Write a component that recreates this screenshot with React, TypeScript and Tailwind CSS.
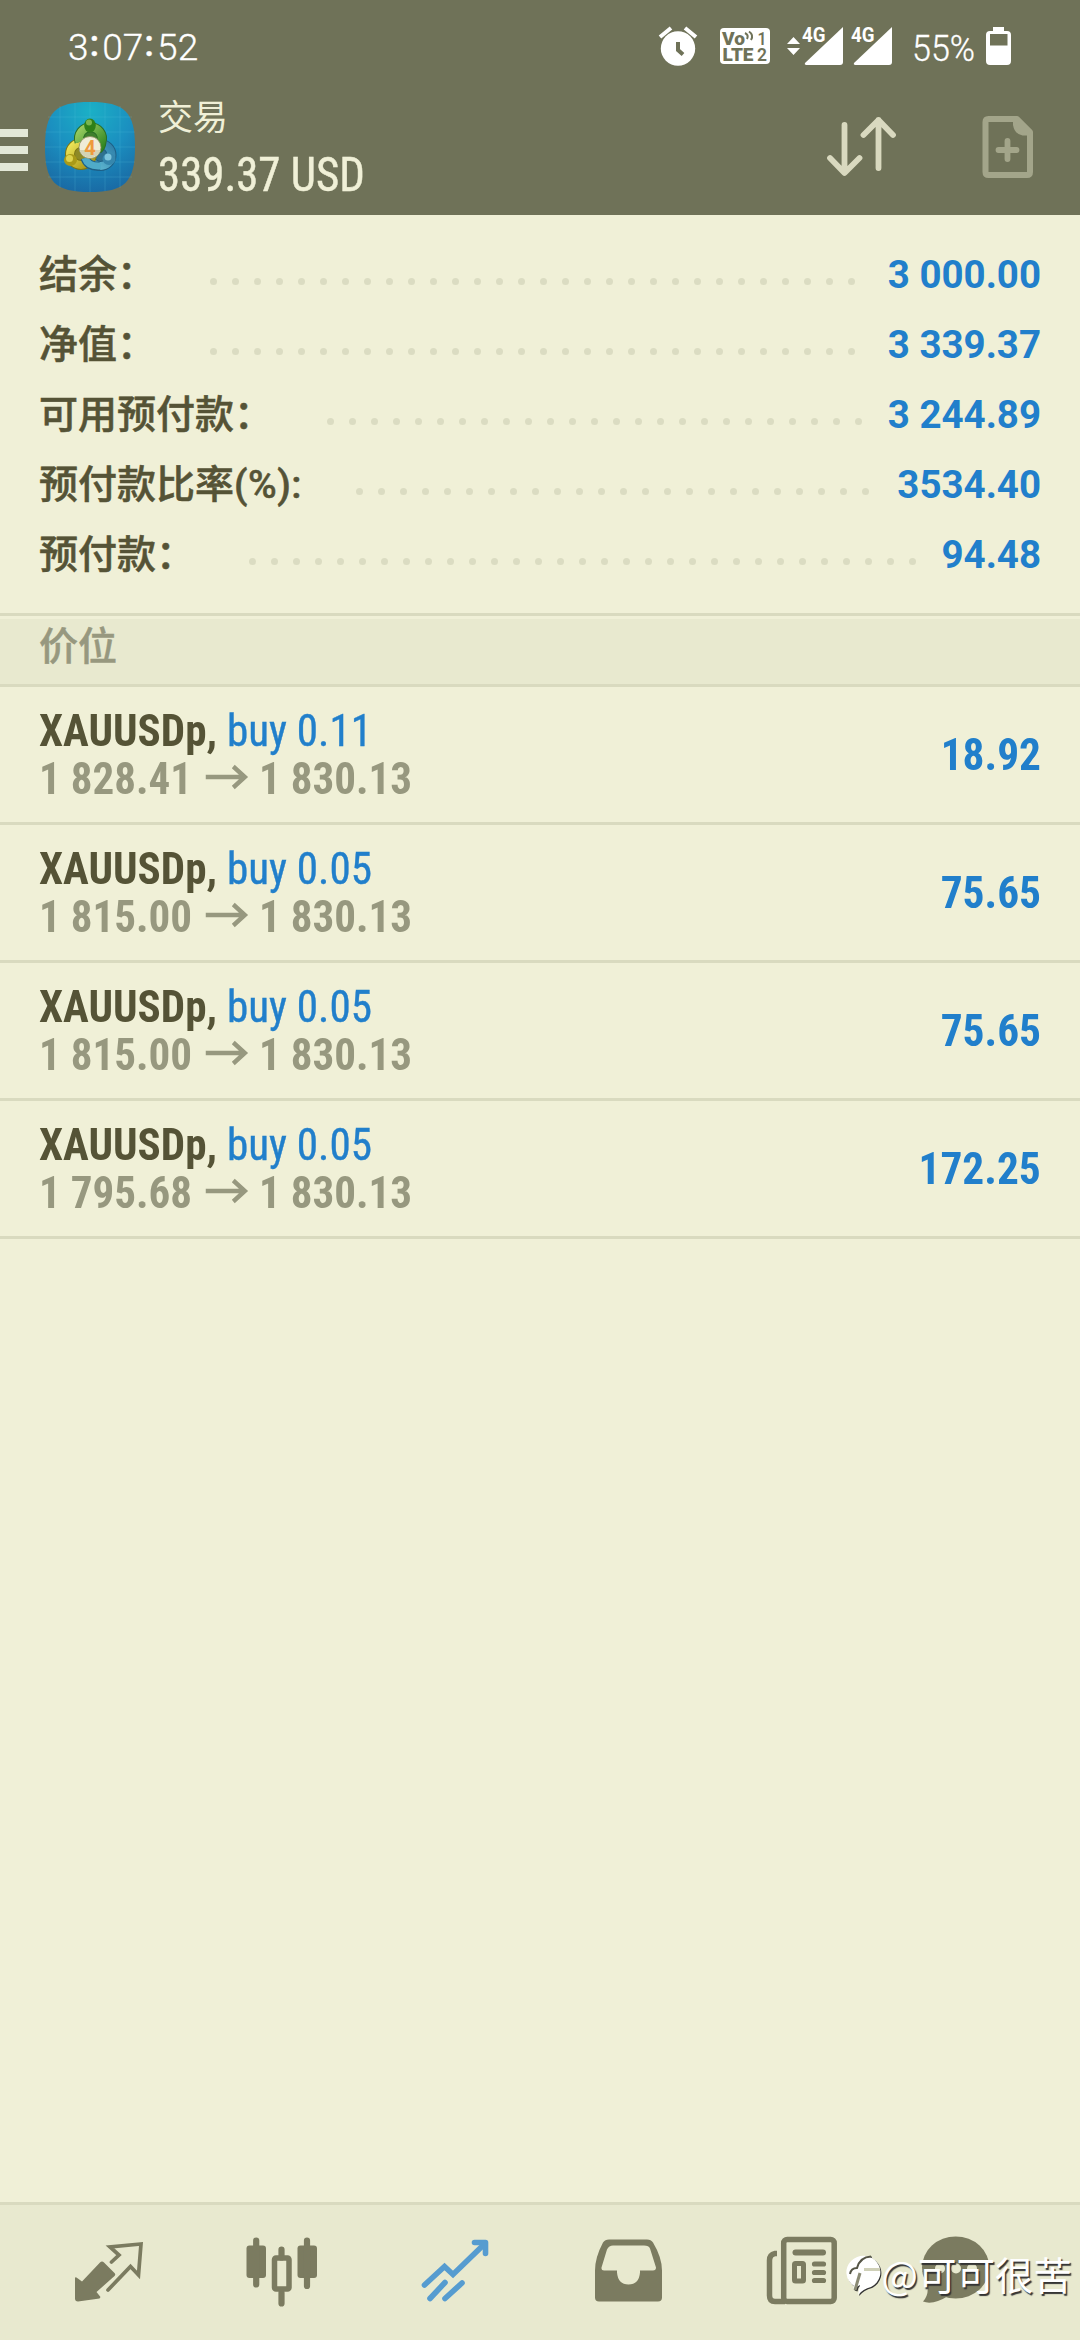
const summary = [
  { label: '结余：', dots: 30, value: '3 000.00' },
  { label: '净值：', dots: 30, value: '3 339.37' },
  { label: '可用预付款：', dots: 25, value: '3 244.89' },
  { label: '预付款比率', unit: '(%):', dots: 24, value: '3534.40' },
  { label: '预付款：', dots: 31, value: '94.48' },
];

const positions = [
  { symbol: 'XAUUSDp,', side: 'buy 0.11', open: '1 828.41', current: '1 830.13', profit: '18.92' },
  { symbol: 'XAUUSDp,', side: 'buy 0.05', open: '1 815.00', current: '1 830.13', profit: '75.65' },
  { symbol: 'XAUUSDp,', side: 'buy 0.05', open: '1 815.00', current: '1 830.13', profit: '75.65' },
  { symbol: 'XAUUSDp,', side: 'buy 0.05', open: '1 795.68', current: '1 830.13', profit: '172.25' },
];

function Clock() {
  return (
    <div className="flex pt-1 text-[37px] leading-none font-light text-white [-webkit-text-stroke:0.300px_white]">
      <span>3</span>
      <span className="-mt-1 mr-[3px] ml-px font-medium">:</span>
      <span>07</span>
      <span className="-mt-1 mr-[3px] ml-px font-medium">:</span>
      <span>52</span>
    </div>
  );
}

function StatusIcons() {
  return (
    <svg width="360" height="50" viewBox="655 20 360 50" className="shrink-0 fill-white">
      {/* Alarm */}
      <circle cx="678" cy="48.500" r="17.200" />
      <path d="M660 37 L671 28 M696 37 L685 28" stroke="white" strokeWidth="4" />
      <path d="M678 42 V50 L683 54.500" stroke="#6f7258" strokeWidth="4" fill="none" />
      {/* VoLTE */}
      <rect x="720" y="28" width="50" height="36" rx="4" />
      <g fill="#6f7258" fontFamily="Roboto" fontWeight="900">
        <text x="722" y="45" fontSize="19" textLength="23" lengthAdjust="spacingAndGlyphs">Vo</text>
        <text x="722.500" y="60.500" fontSize="18.500" textLength="31" lengthAdjust="spacingAndGlyphs">LTE</text>
        <text x="757.500" y="44.500" fontSize="18" fontWeight="600" textLength="9" lengthAdjust="spacingAndGlyphs">1</text>
        <text x="757" y="60.500" fontSize="18" fontWeight="600" textLength="10" lengthAdjust="spacingAndGlyphs">2</text>
      </g>
      <path d="M745 33 Q749 35 747 39 M749 31.500 Q754 35 751 40" stroke="#6f7258" strokeWidth="2" fill="none" />
      {/* Mobile data */}
      <path d="M787 44 L793.500 37 L800 44 Z M787 48 L793.500 55 L800 48 Z" />
      <path d="M843 27 V62 Q843 65 840 65 H806 Q804 64.500 805 63 Z" />
      <path d="M892 27 V62 Q892 65 889 65 H855 Q853 64.500 854 63 Z" />
      <g fontFamily="Roboto" fontSize="19.500" fontWeight="700">
        <text x="802" y="41.500" textLength="23.500" lengthAdjust="spacingAndGlyphs">4G</text>
        <text x="851" y="41.500" textLength="23.500" lengthAdjust="spacingAndGlyphs">4G</text>
      </g>
      <text x="912" y="60.500" fontFamily="Roboto" fontSize="37.500" fontWeight="300" stroke="white" strokeWidth="0.300" textLength="63" lengthAdjust="spacingAndGlyphs">55%</text>
      {/* Battery */}
      <path d="M993 27 H1004 V31 H1007 Q1011 31 1011 35 V61 Q1011 65 1007 65 H990 Q986 65 986 61 V35 Q986 31 990 31 H993 Z" />
      <rect x="990" y="34" width="17.500" height="11.500" fill="#6f7258" />
    </svg>
  );
}

function AppLogo() {
  return (
    <svg width="90" height="90" viewBox="45 102 90 90" className="shrink-0">
      <defs>
        <radialGradient id="tile" cx="0.5" cy="0.1" r="0.95">
          <stop offset="0" stopColor="#1bb0c6" />
          <stop offset="0.5" stopColor="#1b8fc0" />
          <stop offset="1" stopColor="#1967a2" />
        </radialGradient>
        <linearGradient id="green" x1="0" y1="0" x2="1" y2="1">
          <stop offset="0" stopColor="#9ccf62" />
          <stop offset="1" stopColor="#2f8420" />
        </linearGradient>
        <linearGradient id="yellow" x1="0" y1="0" x2="1" y2="1">
          <stop offset="0" stopColor="#efe659" />
          <stop offset="1" stopColor="#a69414" />
        </linearGradient>
        <linearGradient id="blue" x1="1" y1="0" x2="0" y2="1">
          <stop offset="0" stopColor="#2e7fa9" />
          <stop offset="1" stopColor="#66bfd6" />
        </linearGradient>
      </defs>
      <path d="M90 102 C125 102 135 112 135 147 C135 182 125 192 90 192 C55 192 45 182 45 147 C45 112 55 102 90 102 Z" fill="url(#tile)" />
      <path d="M60 106 V188 M75 103 V191 M90 102 V192 M105 103 V191 M120 106 V188 M48 117 H132 M45 132 H135 M45 147 H135 M45 162 H135 M48 177 H132" stroke="#5cc4dc" strokeWidth="0.700" opacity="0.300" />
      <g>
        <circle cx="100.500" cy="155" r="11" fill="#2f7190" stroke="#1d5f85" strokeWidth="10" />
        <circle cx="100.500" cy="155" r="11" fill="none" stroke="url(#blue)" strokeWidth="8" />
        <circle cx="81" cy="154" r="11" fill="#8f8a26" stroke="#7d7614" strokeWidth="10" />
        <circle cx="81" cy="154" r="11" fill="none" stroke="url(#yellow)" strokeWidth="8" />
      </g>
      <g fill="none">
        <path d="M79.500 142 A11.500 11.500 0 1 1 101.500 142 Q101 147 98 149" fill="#3f7f2c" stroke="#2a6e25" strokeWidth="10" />
        <path d="M79.500 142 A11.500 11.500 0 1 1 101.500 142 Q101 147 98 149" stroke="url(#green)" strokeWidth="8" />
        <path d="M85 158 Q88 167 100 166" stroke="#1d5f85" strokeWidth="9" />
        <path d="M85 158 Q88 167 101 166" stroke="#4fabc8" strokeWidth="7" />
      </g>
      <ellipse cx="90" cy="125.500" rx="5.800" ry="7" fill="#2f8018" />
      <ellipse cx="89" cy="122.500" rx="3" ry="3" fill="#79b64e" />
      <ellipse cx="70.500" cy="160" rx="6.500" ry="6" fill="#a99a18" />
      <circle cx="69.500" cy="158.500" r="3.500" fill="#ded34d" />
      <ellipse cx="109" cy="159" rx="6.500" ry="6" fill="#3687ad" />
      <circle cx="108" cy="157" r="3.500" fill="#7cc4dc" />
      <circle cx="90" cy="147.500" r="11" fill="#efecd6" stroke="#8b8d5c" strokeWidth="0.800" />
      <path d="M79.500 150 H100.500 A11 11 0 0 1 79.500 150 Z" fill="#d4d3b4" />
      <text x="90" y="154.500" textAnchor="middle" fontFamily="Roboto" fontSize="20" fontWeight="700" fill="#ee9a3c">4</text>
    </svg>
  );
}

function HeaderActions() {
  return (
    <svg width="220" height="70" viewBox="819.500 112 220 70" className="shrink-0" fill="none" strokeLinecap="round" strokeLinejoin="round">
      <path d="M844 125 V172 M829.500 158 L844 173 L859 158 M878 168 V120 M863 135 L878 120 L892.500 135" stroke="#d9d9bf" strokeWidth="5.800" />
      <path d="M985 122 Q985 119 988 119 H1016.500 L1029.500 132 V172 Q1029.500 175 1026.500 175 H988 Q985 175 985 172 Z" stroke="#a3a58a" strokeWidth="6" />
      <path d="M1012.500 119 V125 Q1014 134 1022 135.500 H1030 V130 L1018 118 Z" fill="#a3a58a" />
      <path d="M1007 141 V159 M998 150 H1016" stroke="#a3a58a" strokeWidth="5.800" />
    </svg>
  );
}

function PriceArrow() {
  return (
    <svg width="45" height="26" viewBox="0 0 45 26" className="mr-[11px] mb-[3px] ml-[14px]" fill="none" stroke="#97987f" strokeWidth="4.600">
      <path d="M0 13 H42 M29 2.500 L41 13 L29 23.500" />
    </svg>
  );
}

function BottomNav() {
  return (
    <nav className="flex h-[138px] w-full items-center border-t-[3px] border-[#d9dabf] bg-[#e8e9cf] pr-5 pl-[22px] text-[#7b7b60]">
      {/* Quotes */}
      <div className="flex flex-1 justify-center">
        <svg width="80" height="80" viewBox="69 2232.500 80 80" fill="currentColor">
          <path d="M75 2278 Q75 2276 76.500 2277 L82 2281 L100 2262 Q102 2260 104 2262 L114.500 2272.500 Q116 2274 114.500 2275.500 L96.500 2291.500 L100.500 2296.500 L99.500 2298 L78 2301 Q75 2301 75 2298 Z" />
          <path d="M111.500 2261.500 L119 2254.500 L110 2246.500 L141 2243.500 L138.500 2274.500 L130.500 2266 L108 2289.500" fill="none" stroke="currentColor" strokeWidth="3.700" strokeLinecap="round" strokeLinejoin="miter" />
        </svg>
      </div>
      {/* Charts */}
      <div className="flex flex-1 justify-center">
        <svg width="80" height="80" viewBox="241.500 2232.500 80 80" fill="currentColor">
          <rect x="246" y="2245" width="19.500" height="32.500" rx="3" />
          <rect x="297" y="2245" width="19.500" height="32.500" rx="3" />
          <path d="M255.700 2240 V2284 M306.500 2240 V2285.500 M281 2249 V2257 M281 2292 V2303" stroke="currentColor" strokeWidth="6.200" strokeLinecap="round" />
          <rect x="274" y="2257.500" width="14.500" height="31" rx="1.500" fill="none" stroke="currentColor" strokeWidth="5.500" />
        </svg>
      </div>
      {/* Trade */}
      <div className="flex flex-1 justify-center text-[#569cd0]">
        <svg width="80" height="80" viewBox="414 2232.500 80 80" fill="none" stroke="currentColor" strokeWidth="5.600" strokeLinecap="round" strokeLinejoin="miter">
          <path d="M423.500 2284.500 L443.500 2266 L452 2274 L484 2243" />
          <path d="M473.500 2242 H484.500 V2253" strokeLinejoin="round" />
          <path d="M429 2298 L444 2282 M444 2298 L461 2282.500" />
        </svg>
      </div>
      {/* History */}
      <div className="flex flex-1 justify-center">
        <svg width="80" height="80" viewBox="587 2232.500 80 80" fill="currentColor" fillRule="evenodd">
          <path d="M608 2239 H646 Q650 2239 652 2242 Q661 2257 661 2270 V2297 Q661 2301 657 2301 H598 Q594 2301 594 2297 V2270 Q594 2257 602 2242 Q604 2239 608 2239 Z M612 2245 H643 Q648 2245 649 2248 L655 2267 Q655 2270 652 2270 H639 V2272 Q638 2284 627.500 2284 Q617 2284 616 2272 V2270 H603 Q600 2270 600.500 2267 L606 2249 Q608 2245 612 2245 Z" />
        </svg>
      </div>
      {/* News */}
      <div className="flex flex-1 justify-center">
        <svg width="80" height="80" viewBox="760 2232.500 80 80" fill="none" stroke="currentColor" strokeWidth="5.500">
          <rect x="782.700" y="2239" width="50.500" height="62" rx="3.500" />
          <path d="M776 2253 H774 Q768.500 2254 768.500 2260 V2295 Q768.500 2301 774 2301 H784" />
          <path d="M794.500 2252 H822" strokeWidth="6" strokeLinecap="round" />
          <rect x="793.500" y="2263" width="9" height="17.500" rx="1" strokeWidth="5" />
          <path d="M813.500 2263.500 H822.500 M813.500 2272 H822.500 M813.500 2280 H822.500" strokeWidth="5.200" strokeLinecap="round" />
        </svg>
      </div>
      {/* Chat, with the signature over it */}
      <div className="relative flex flex-1 justify-center">
        <svg width="80" height="80" viewBox="915 2232.500 80 80" className="mr-9" fill="currentColor">
          <ellipse cx="954.700" cy="2267" rx="33.700" ry="31" />
          <path d="M921 2270 Q932 2290 922 2301 Q932 2305 948 2295 Z" />
          <g fill="#e8e9cf">
            <circle cx="939" cy="2268" r="5" />
            <circle cx="955" cy="2268" r="5" />
            <circle cx="971" cy="2268" r="5" />
          </g>
        </svg>
        <div className="absolute top-[17px] -right-[12px] flex items-center whitespace-nowrap text-white">
          <svg width="38" height="46" viewBox="842 2258 38 46" fill="none" className="drop-shadow-[1px_1px_0_#333]">
            <path d="M852 2294 A17 16.500 0 1 1 869 2295 Q861 2297 856 2303 L858 2293 L851 2297 Z" fill="white" />
            <path d="M848 2282 Q849 2276 855 2276 Q858 2265 869 2264.500" stroke="#555546" strokeWidth="2" />
            <path d="M862 2277.500 H878" stroke="#cfd0b8" strokeWidth="3" />
            <path d="M858 2281 L853 2298" stroke="#8a8a74" strokeWidth="3" />
          </svg>
          <span className="font-['Noto_Sans_CJK_SC',sans-serif] text-[38.500px] leading-[46px] font-normal [text-shadow:1.500px_1.500px_1px_#333]">@可可很苦</span>
        </div>
      </div>
    </nav>
  );
}

export default function App() {
  return (
    <div className="flex h-[2340px] w-[1080px] flex-col overflow-hidden bg-[#f0f0d7] font-[Roboto,'Noto_Sans_CJK_SC',sans-serif]">
      <header className="h-[215px] bg-[#6f7258]">
        {/* Status bar */}
        <div className="flex h-[90px] items-center justify-between pr-[65px] pl-[68px]">
          <Clock />
          <StatusIcons />
        </div>

        {/* Title bar */}
        <div className="flex h-[125px] pr-10">
          <div className="mt-[39px] flex w-7 flex-col gap-[9px]">
            <div className="h-2 bg-[#e3e8d7]" />
            <div className="h-2 bg-[#e3e8d7]" />
            <div className="h-2 bg-[#e3e8d7]" />
          </div>
          <div className="mt-3 ml-[17px]">
            <AppLogo />
          </div>
          <div className="ml-[23px] flex-1 text-[#f0f0d7]">
            <div className="mt-[7px] text-[35px] leading-[44px]">交易</div>
            <div className="mt-[6px] origin-left scale-x-[0.915] text-[49px] leading-[56px] [font-stretch:75%] [-webkit-text-stroke:0.500px_#f0f0d7]">339.37 USD</div>
          </div>
          <div className="mt-[22px]">
            <HeaderActions />
          </div>
        </div>
      </header>

      {/* Account summary */}
      <section className="h-[398px] px-[39px] pt-6">
        {summary.map((row) => (
          <div key={row.label} className="flex h-[70px] items-center text-[39px] leading-none font-medium whitespace-nowrap">
            <span className="pt-0.5 text-[#555336] [-webkit-text-stroke:0.500px_#555336]">
              {row.label}
              {row.unit && <span className="tracking-[0.5px]">{row.unit}</span>}
            </span>
            <div className="mt-[15px] ml-[54px] flex gap-[15px]">
              {Array.from({ length: row.dots }, (_, i) => (
                <span key={i} className="size-[7px] rounded-full bg-[#dbdcc2]" />
              ))}
            </div>
            <span className="ml-auto pt-0.5 text-[38.500px] font-bold text-[#217fcb]">{row.value}</span>
          </div>
        ))}
      </section>

      <div className="h-[74px] border-y-[3px] border-[#d9dabf] pt-[3px]">
        <div className="h-[65px] bg-[#e8e9cf] px-[39px] text-[39px] leading-[57px] font-medium text-[#97987f] [-webkit-text-stroke:0.500px_#97987f]">价位</div>
      </div>

      {/* Open positions */}
      <main className="flex-1">
        {positions.map((pos, i) => (
          <div key={i} className="flex h-[138px] items-center justify-between border-b-[3px] border-[#d9dabf] px-[39px] text-[45px] font-bold [font-stretch:75%]">
            <div className="origin-left scale-x-[0.957]">
              <div className="leading-[48px] text-[#555336]">
                {pos.symbol} <span className="font-normal text-[#217fcb] [-webkit-text-stroke:0.400px_#217fcb]">{pos.side}</span>
              </div>
              <div className="flex items-center leading-[48px] text-[#97987f]">
                {pos.open}
                <PriceArrow />
                {pos.current}
              </div>
            </div>
            <div className="origin-right scale-x-[0.965] text-[#217fcb]">{pos.profit}</div>
          </div>
        ))}
      </main>

      <BottomNav />
    </div>
  );
}
